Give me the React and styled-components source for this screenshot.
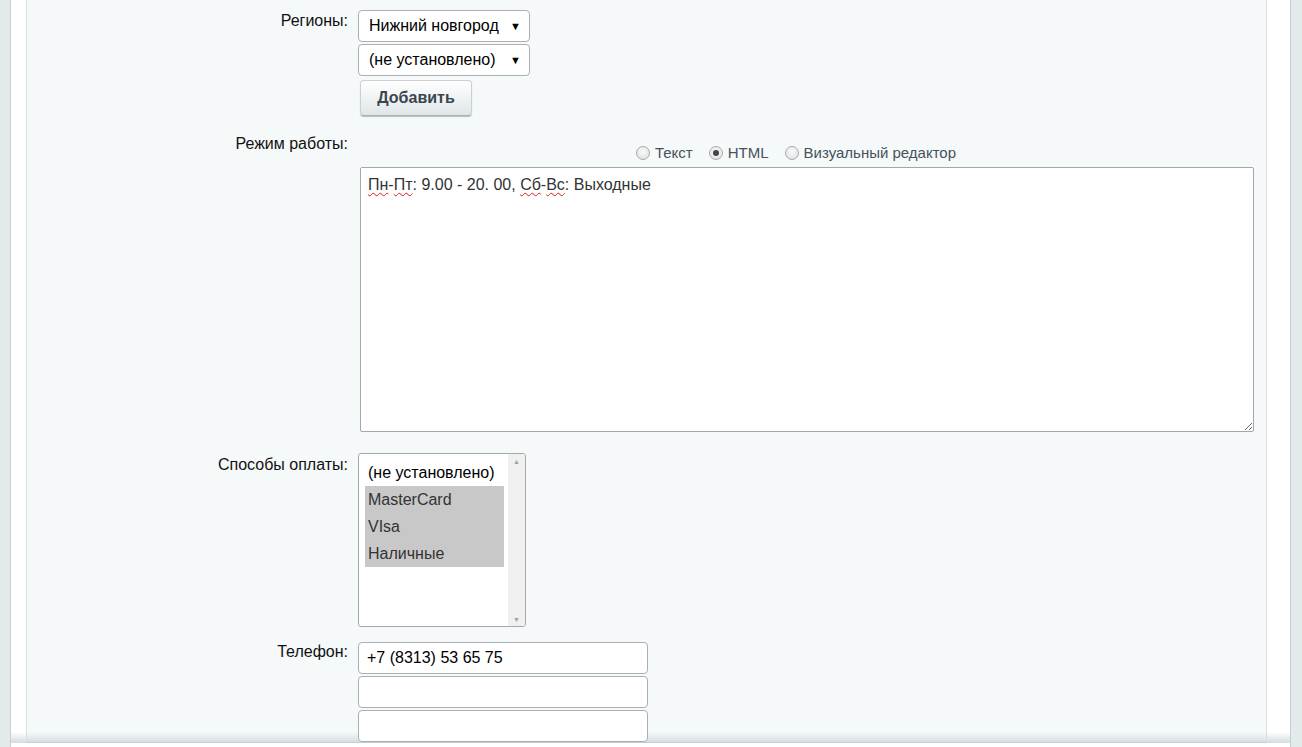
import React from 'react';
import styled, { createGlobalStyle } from 'styled-components';

const GlobalStyle = createGlobalStyle`
  html, body {
    margin: 0;
    padding: 0;
    height: 747px;
    overflow: hidden;
    background: #e3eaeb;
    font-family: "Liberation Sans", Arial, sans-serif;
  }
`;

const Page = styled.div`
  box-sizing: border-box;
  height: 747px;
  margin: 0 11px 0 10px;
  padding: 0 23px 4px 15px;
  border-left: 1px solid #c6d0d3;
  border-right: 1px solid #c6d0d3;
  background:
    linear-gradient(to bottom, rgba(255,255,255,0), #d3dcdf) no-repeat 0 732px / 100% 11px,
    #fff;
`;

const Panel = styled.div`
  box-sizing: border-box;
  height: 100%;
  padding-top: 10px;
  border-left: 1px solid #d7dfe2;
  border-right: 1px solid #d7dfe2;
  border-bottom: 1px solid #c4ced1;
  background:
    linear-gradient(to bottom, rgba(245,249,250,0), #d6dfe2) no-repeat left bottom / 100% 10px,
    #f5f9fa;
`;

const Row = styled.div`
  display: grid;
  grid-template-columns: 321px 1fr;
  column-gap: 10px;
  margin-top: ${p => p.$top || 0}px;
`;

const Label = styled.div`
  text-align: right;
  font-size: 16px;
  line-height: 18px;
  padding-top: ${p => p.$pad || 2}px;
  color: #111;
`;

const Controls = styled.div`
  display: flex;
  flex-direction: column;
  align-items: flex-start;
`;

const Select = styled.div`
  box-sizing: border-box;
  width: 172px;
  height: 32px;
  margin-bottom: 2px;
  padding: 0 8px 0 10px;
  display: flex;
  align-items: center;
  justify-content: space-between;
  background: #fff;
  border: 1px solid #a9afb3;
  border-radius: 4px;
  font-size: 16px;
  color: #000;
`;

const Arrow = styled.span`
  font-size: 11px;
  color: #000;
`;

const Button = styled.button`
  box-sizing: border-box;
  width: 112px;
  height: 36px;
  margin: 2px 0 0 2px;
  border: 1px solid #c9d1d4;
  border-bottom-color: #a9b3b7;
  border-radius: 4px;
  background: linear-gradient(to bottom, #ffffff, #dfe6e8);
  box-shadow: 0 1px 1px rgba(0,0,0,0.25), inset 0 1px 0 #fff;
  font-family: "Liberation Sans", Arial, sans-serif;
  font-weight: bold;
  font-size: 16px;
  color: #3b4650;
`;

const ModeBar = styled.div`
  box-sizing: border-box;
  width: 896px;
  height: 34px;
  padding: 5px 20px 0 0;
  display: flex;
  justify-content: center;
  gap: 16px;
`;

const Radio = styled.label`
  display: flex;
  align-items: center;
  gap: 5px;
  font-size: 15px;
  color: #46525c;
  line-height: 17px;
`;

const Dot = styled.span`
  box-sizing: border-box;
  width: 14px;
  height: 14px;
  border-radius: 50%;
  border: 1px solid #a7abae;
  background: radial-gradient(circle at 50% 40%, #fbfbfb, #dcdcdc);
  display: flex;
  align-items: center;
  justify-content: center;
  &::after {
    content: '';
    display: ${p => (p.$on ? 'block' : 'none')};
    width: 6px;
    height: 6px;
    border-radius: 50%;
    background: #444;
  }
`;

const TextArea = styled.div`
  box-sizing: border-box;
  width: 894px;
  height: 265px;
  margin-left: 2px;
  padding: 8px 7px;
  background: #fff;
  border: 1px solid #a3a8ac;
  border-radius: 2px;
  font-size: 16px;
  line-height: 18px;
  color: #333;
  resize: both;
  overflow: auto;
`;

const Typo = styled.span`
  text-decoration: underline wavy #e0201a;
  text-decoration-skip-ink: none;
  text-underline-offset: 2px;
  text-decoration-thickness: 1px;
`;

const ListBox = styled.div`
  box-sizing: border-box;
  width: 168px;
  height: 174px;
  display: flex;
  background: #fff;
  border: 1px solid #a4a8ac;
  border-radius: 3px;
  overflow: hidden;
`;

const Options = styled.div`
  flex: 1;
  padding: 5px 4px 0 6px;
`;

const Option = styled.div`
  height: 27px;
  line-height: 27px;
  padding-left: 3px;
  font-size: 16px;
  white-space: nowrap;
  color: ${p => (p.$sel ? '#333' : '#000')};
  background: ${p => (p.$sel ? '#c8c8c8' : 'transparent')};
`;

const ScrollBar = styled.div`
  width: 17px;
  flex: none;
  background: #f0f0f0;
  display: flex;
  flex-direction: column;
  justify-content: space-between;
  align-items: center;
  padding: 4px 0 3px;
  font-size: 7px;
  color: #a3a3a3;
`;

const Input = styled.div`
  box-sizing: border-box;
  width: 290px;
  height: 32px;
  margin-bottom: 2px;
  padding: 0 8px;
  display: flex;
  align-items: center;
  background: #fff;
  border: 1px solid #a9afb3;
  border-radius: 4px;
  font-size: 16px;
  color: #000;
`;

export default function App() {
  return (
    <>
      <GlobalStyle />
      <Page>
        <Panel>
          <Row>
            <Label>Регионы:</Label>
            <Controls>
              <Select>Нижний новгород<Arrow>▼</Arrow></Select>
              <Select>(не установлено)<Arrow>▼</Arrow></Select>
              <Button>Добавить</Button>
            </Controls>
          </Row>

          <Row $top={17}>
            <Label>Режим работы:</Label>
            <Controls>
              <ModeBar>
                <Radio><Dot />Текст</Radio>
                <Radio><Dot $on />HTML</Radio>
                <Radio><Dot />Визуальный редактор</Radio>
              </ModeBar>
              <TextArea>
                <Typo>Пн</Typo>-<Typo>Пт</Typo>: 9.00 - 20. 00, <Typo>Сб</Typo>-<Typo>Вс</Typo>: Выходные
              </TextArea>
            </Controls>
          </Row>

          <Row $top={21}>
            <Label $pad={3}>Способы оплаты:</Label>
            <Controls>
              <ListBox>
                <Options>
                  <Option>(не установлено)</Option>
                  <Option $sel>MasterCard</Option>
                  <Option $sel>VIsa</Option>
                  <Option $sel>Наличные</Option>
                </Options>
                <ScrollBar>
                  <span>▲</span>
                  <span>▼</span>
                </ScrollBar>
              </ListBox>
            </Controls>
          </Row>

          <Row $top={15}>
            <Label $pad={1}>Телефон:</Label>
            <Controls>
              <Input>+7 (8313) 53 65 75</Input>
              <Input />
              <Input />
            </Controls>
          </Row>
        </Panel>
      </Page>
    </>
  );
}
